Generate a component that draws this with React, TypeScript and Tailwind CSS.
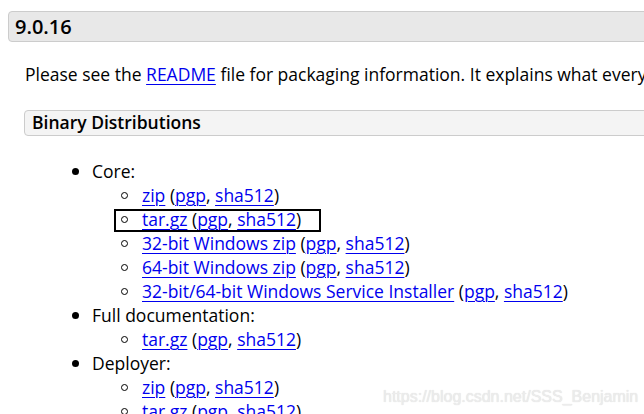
import React from "react";

const L = ({ children }: { children: React.ReactNode }) => (
  <a href="#" className="text-[#0000ee] underline underline-offset-[3px] decoration-1">{children}</a>
);

const Sig = () => (
  <>
    {" "}(<L>pgp</L>, <L>sha512</L>)
  </>
);

const Sub = ({ children, boxed }: { children: React.ReactNode; boxed?: boolean }) => (
  <li className="flex items-center h-6 relative">
    <span className="w-[7px] h-[7px] rounded-full border-[1.5px] border-black mr-[14px]" />
    <span>{children}</span>
    {boxed && <span className="absolute left-[-7px] top-[2px] w-[207px] h-[23px] border-2 border-black" />}
  </li>
);

const Top = ({ label }: { label: string }) => (
  <div className="flex items-center h-6">
    <span className="w-[7px] h-[7px] rounded-full bg-black mr-[13px] ml-[1px]" />
    <span>{label}</span>
  </div>
);

export default function App() {
  return (
    <div className="w-[644px] h-[414px] overflow-hidden bg-white relative text-black whitespace-nowrap" style={{ fontFamily: '"Open Sans", sans-serif' }}>
      <div className="ml-[8px] mt-[11px] w-[700px] h-[31px] bg-[#e8e8e8] border border-[#cccccc] rounded-[4px] flex items-center pl-[6px]">
        <span className="text-[20px] font-semibold leading-none">9.0.16</span>
      </div>
      <p className="ml-[25px] mt-[20px] text-[17.5px] leading-6">
        Please see the <L>README</L> file for packaging information. It explains what every distribution contains.
      </p>
      <div className="ml-[24px] mt-[24px] w-[700px] h-[26px] bg-[#f4f4f4] border border-[#cccccc] rounded-[4px] flex items-center pl-[7px]">
        <span className="text-[17.5px] font-semibold leading-none">Binary Distributions</span>
      </div>
      <ul className="mt-[23px] ml-[71px] text-[17.5px] leading-6">
        <li>
          <Top label="Core:" />
          <ul className="ml-[50px]">
            <Sub><L>zip</L><Sig /></Sub>
            <Sub boxed><L>tar.gz</L><Sig /></Sub>
            <Sub><L>32-bit Windows zip</L><Sig /></Sub>
            <Sub><L>64-bit Windows zip</L><Sig /></Sub>
            <Sub><L>32-bit/64-bit Windows Service Installer</L><Sig /></Sub>
          </ul>
        </li>
        <li>
          <Top label="Full documentation:" />
          <ul className="ml-[50px]">
            <Sub><L>tar.gz</L><Sig /></Sub>
          </ul>
        </li>
        <li>
          <Top label="Deployer:" />
          <ul className="ml-[50px]">
            <Sub><L>zip</L><Sig /></Sub>
            <Sub><L>tar.gz</L><Sig /></Sub>
          </ul>
        </li>
      </ul>
      <div className="absolute left-[383px] top-[385px] text-[16px] text-[#ececec]" style={{ fontFamily: '"Liberation Sans", Arial, sans-serif', textShadow: "0 0 1px #d8d8d8" }}>
        https://blog.csdn.net/SSS_Benjamin
      </div>
    </div>
  );
}
